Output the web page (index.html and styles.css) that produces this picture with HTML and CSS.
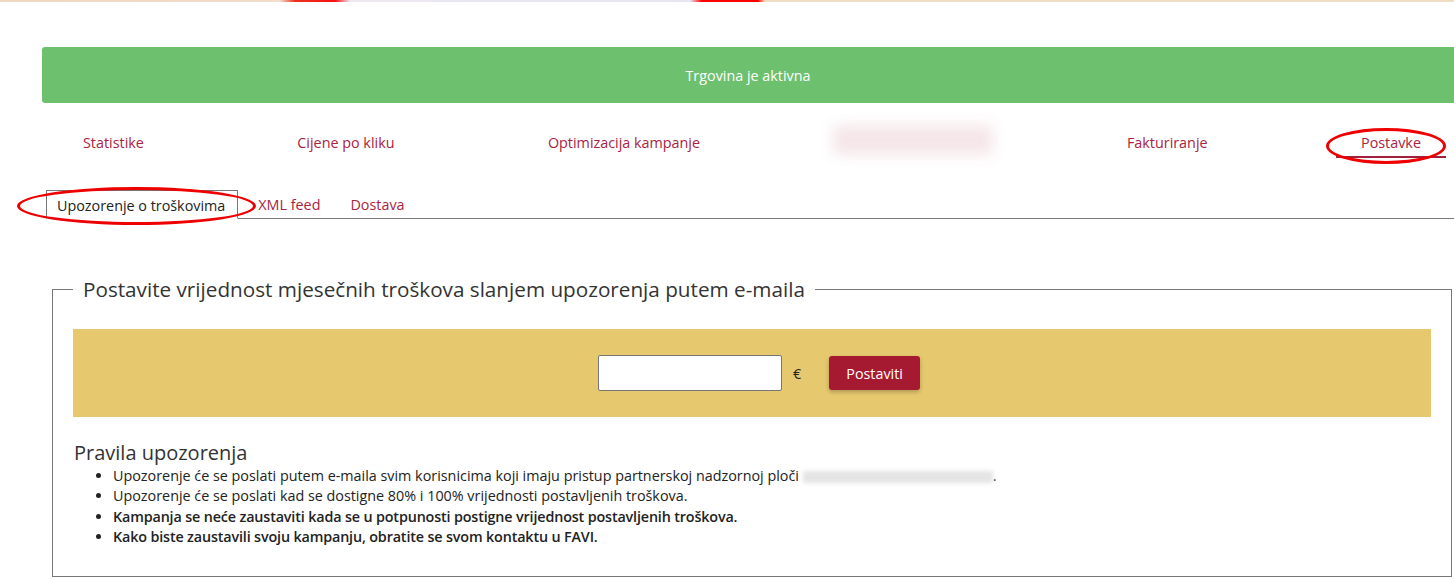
FILE: index.html
```html
<!DOCTYPE html>
<html lang="hr">
<head>
<meta charset="utf-8">
<title>Upozorenje o troškovima</title>
<link rel="stylesheet" href="styles.css">
</head>
<body>
<div class="topstrip"></div>
<div class="status">Trgovina je aktivna</div>
<nav class="mainnav">
  <a class="nav-item">Statistike</a>
  <a class="nav-item">Cijene po kliku</a>
  <a class="nav-item">Optimizacija kampanje</a>
  <span class="nav-item nav-blur"><span class="blurbox"></span></span>
  <a class="nav-item">Fakturiranje</a>
  <a class="nav-item active">Postavke<span class="mark mark-nav"></span></a>
</nav>
<div class="tabs">
  <a class="tab active">Upozorenje o troškovima<span class="mark mark-tab"></span></a>
  <a class="tab">XML feed</a>
  <a class="tab">Dostava</a>
  <span class="tab-fill"></span>
</div>
<fieldset class="alertset">
  <legend>Postavite vrijednost mjesečnih troškova slanjem upozorenja putem e-maila</legend>
  <div class="setbox">
    <input class="amount" type="text">
    <span class="cur">€</span>
    <button class="btn">Postaviti</button>
  </div>
  <h3 class="rules-title">Pravila upozorenja</h3>
  <ul class="rules">
    <li>Upozorenje će se poslati putem e-maila svim korisnicima koji imaju pristup partnerskoj nadzornoj ploči <span class="blurtext"></span>.</li>
    <li>Upozorenje će se poslati kad se dostigne 80% i 100% vrijednosti postavljenih troškova.</li>
    <li class="strong">Kampanja se neće zaustaviti kada se u potpunosti postigne vrijednost postavljenih troškova.</li>
    <li class="strong">Kako biste zaustavili svoju kampanju, obratite se svom kontaktu u FAVI.</li>
  </ul>
</fieldset>
</body>
</html>
```
FILE: styles.css
```css
html, body {
  margin: 0;
  padding: 0;
  background: #fff;
  overflow: hidden;
}
body {
  font-family: "Open Sans", "Noto Sans", sans-serif;
  font-size: 14.35px;
  color: #222;
}
.topstrip {
  height: 2px;
  background: linear-gradient(90deg, #efd8c0 0, #f2dccb 280px, #f03020 295px, #f51010 335px, #ece6f0 350px, #e6e6f2 690px, #ff0000 702px, #ff0000 758px, #f0dcc4 765px, #f0dcc4 100%);
}
.status {
  margin: 45px 0 0 42px;
  height: 56px;
  background: #6cc06e;
  border-radius: 3px 0 0 3px;
  color: #fff;
  display: flex;
  align-items: center;
  justify-content: center;
}
.mainnav {
  margin: 20px 8px 0 58px;
  display: flex;
  justify-content: space-between;
  align-items: stretch;
}
.nav-item {
  position: relative;
  padding: 10px 25px 3px;
  line-height: 20px;
  color: #a8233f;
  border-bottom: 2px solid transparent;
}
.nav-item.active {
  border-bottom-color: #a01f3a;
}
.nav-blur {
  padding: 0;
  display: flex;
  align-items: center;
}
.blurbox {
  display: block;
  width: 160px;
  height: 30px;
  margin: 0 5px;
  background: #f5e6e9;
  filter: blur(7px);
}
.mark {
  position: absolute;
  border: 3px solid #ee0000;
  border-radius: 50%;
  pointer-events: none;
}
.mark-nav {
  left: -10px;
  top: 5px;
  width: 114px;
  height: 30px;
}
.tabs {
  margin: 32px 0 0 46px;
  display: flex;
  height: 29px;
}
.tab {
  position: relative;
  line-height: 30px;
  color: #a8233f;
  padding: 0 10px 0 20px;
  border-bottom: 1px solid #777;
}
.tab.active {
  color: #222;
  padding: 0 12px 0 10px;
  border: 1px solid #777;
  border-bottom: 1px solid transparent;
  line-height: 29px;
}
.tab-fill {
  flex: 1;
  border-bottom: 1px solid #777;
}
.mark-tab {
  left: -30px;
  top: -4px;
  width: 233px;
  height: 32px;
}
.alertset {
  margin: 56px 0 0 52px;
  width: 1400px;
  box-sizing: border-box;
  border: 1px solid #777;
  padding: 0 20px 29px;
}
.alertset legend {
  padding: 0 10px;
  font-size: 20.7px;
  line-height: 28px;
  color: #333;
  font-weight: 400;
}
.setbox {
  margin-top: 26px;
  height: 88px;
  background: #e6c96f;
  display: flex;
  align-items: center;
  justify-content: center;
  padding-left: 14px;
}
.amount {
  width: 184px;
  height: 36px;
  box-sizing: border-box;
  border: 1px solid #767676;
  border-radius: 2px;
  background: #fff;
  font-family: inherit;
}
.cur {
  margin: 0 28px 0 11px;
  color: #222;
}
.btn {
  height: 34px;
  padding: 0 17px;
  background: #a51931;
  color: #fff;
  border: 0;
  border-radius: 3px;
  font-family: inherit;
  font-size: 14.35px;
  box-shadow: 0 2px 4px rgba(0,0,0,0.25);
}
.rules-title {
  margin: 23px 0 0 1px;
  font-size: 20px;
  line-height: 26px;
  font-weight: 400;
  color: #333;
}
.rules {
  margin: 0;
  padding-left: 40px;
  line-height: 20.3px;
}
.rules li.strong {
  font-weight: 600;
  letter-spacing: -0.15px;
}
.blurtext {
  display: inline-block;
  width: 190px;
  height: 12px;
  vertical-align: middle;
  background: #e4e4e4;
  filter: blur(2px);
}
```
